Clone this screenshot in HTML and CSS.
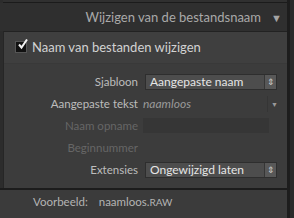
FILE: index.html
```html
<!DOCTYPE html>
<html lang="nl">
<head>
    <meta charset="UTF-8">
    <title>Wijzigen van de bestandsnaam</title>
    <link rel="stylesheet" href="styles.css">
</head>
<body>
    <div class="sidebar">
        <div class="column">
            <div class="prev-panel"></div>

            <div class="section-header">
                <span class="section-title">Wijzigen van de bestandsnaam</span>
                <span class="toggle">&#9660;</span>
            </div>

            <div class="panel">
                <label class="check-row">
                    <span class="checkbox">
                        <svg width="11" height="11" viewBox="0 0 11 11">
                            <path d="M2 5.5 L4.5 8.5 L10 0.5" fill="none" stroke="#f2f2f2" stroke-width="2"/>
                        </svg>
                    </span>
                    Naam van bestanden wijzigen
                </label>

                <div class="fields">
                    <span class="label">Sjabloon</span>
                    <div class="select">
                        <span class="select-value">Aangepaste naam</span>
                        <span class="stepper">&#8661;</span>
                    </div>

                    <span class="label">Aangepaste tekst</span>
                    <div class="text-field">
                        <span class="text-value">naamloos</span>
                        <span class="combo-arrow">&#9660;</span>
                    </div>

                    <span class="label disabled">Naam opname</span>
                    <div class="disabled-box"></div>

                    <span class="label disabled">Beginnummer</span>
                    <div></div>

                    <span class="label">Extensies</span>
                    <div class="select">
                        <span class="select-value">Ongewijzigd laten</span>
                        <span class="stepper">&#8661;</span>
                    </div>
                </div>
            </div>

            <div class="preview">
                <span class="preview-label">Voorbeeld:</span>
                <span class="preview-name">naamloos.<span class="ext">RAW</span></span>
            </div>
        </div>
        <div class="scrollbar"></div>
    </div>
</body>
</html>
```

FILE: styles.css
```css
body {
    margin: 0;
    padding: 0;
    background-color: #2c2c2c;
    font-family: 'Lato', 'Liberation Sans', sans-serif;
    overflow: hidden;
}

.sidebar {
    display: flex;
    width: 294px;
    height: 218px;
}

.column {
    width: 287px;
    display: flex;
    flex-direction: column;
}

.scrollbar {
    width: 4px;
    border-left: 3px solid #1d1d1d;
    background-color: #2a2a2a;
}

/* bottom edge of the panel above */
.prev-panel {
    height: 2px;
    margin-left: 3px;
    border-bottom: 1px solid #1b1b1b;
    background-color: #303030;
}

.section-header {
    height: 28px;
    display: flex;
    align-items: center;
    justify-content: flex-end;
    padding-right: 4px;
    background-color: #2f2f2f;
}

.section-title {
    font-size: 13px;
    color: #a9a9a9;
}

.toggle {
    font-size: 11px;
    color: #a4a4a4;
    margin-left: 10px;
    width: 12px;
}

.panel {
    margin-left: 3px;
    border-top: 1px solid #222;
    border-left: 1px solid #262626;
    background-color: #3c3c3c;
}

.check-row {
    height: 29px;
    display: flex;
    align-items: center;
    padding-left: 11px;
    padding-bottom: 2px;
    font-size: 13px;
    color: #d2d2d2;
    background-color: #3f3f3f;
    border-bottom: 1px solid #393939;
}

.checkbox {
    width: 10px;
    height: 10px;
    background-color: #111;
    border: 1px solid #555;
    margin-right: 5px;
    position: relative;
}

.checkbox svg {
    position: absolute;
    left: 1px;
    top: -3px;
}

.fields {
    display: grid;
    grid-template-columns: 134px 134px;
    grid-template-rows: repeat(5, 16px);
    column-gap: 5px;
    row-gap: 6px;
    padding: 10px 0 10px 0;
}

.label {
    text-align: right;
    font-size: 11.5px;
    line-height: 16px;
    color: #bdbdbd;
}

.label.disabled {
    color: #666;
}

.select {
    display: flex;
    margin-left: 2px;
    width: 130px;
    height: 14px;
    border: 1px solid #2e2e2e;
    background-color: #4d4d4d;
}

.select-value {
    flex: 1;
    padding-left: 4px;
    font-size: 12px;
    line-height: 14px;
    color: #e6e6e6;
}

.stepper {
    width: 11px;
    border-left: 1px solid #363636;
    background-color: #585858;
    color: #cfcfcf;
    font-size: 9px;
    line-height: 14px;
    text-align: center;
}

.text-field {
    display: flex;
    align-items: center;
    width: 134px;
    height: 16px;
}

.text-value {
    flex: 0 0 124px;
    height: 16px;
    font-size: 12px;
    font-style: italic;
    line-height: 16px;
    color: #9a9a9a;
    border-right: 1px solid #353535;
}

.combo-arrow {
    margin-left: 3px;
    font-size: 7px;
    color: #9a9a9a;
}

.disabled-box {
    width: 126px;
    height: 15px;
    background-color: #363636;
}

.preview {
    flex: 1;
    border-top: 2px solid #1c1c1c;
    background-color: #3b3b3b;
    padding: 5px 0 0 33px;
    font-size: 11.5px;
    color: #b4b4b4;
}

.preview-name {
    margin-left: 8px;
}

.ext {
    font-size: 10px;
}
```
